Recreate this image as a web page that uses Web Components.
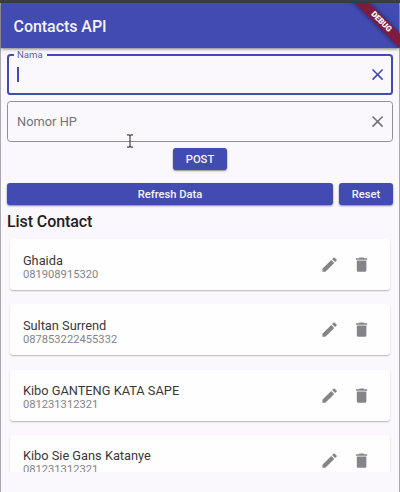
<!DOCTYPE html>
<html lang="id"><head><meta charset="utf-8"><title>Contacts API</title>
<style>
html,body{margin:0;height:100%;overflow:hidden}
body{font-family:Roboto,"Liberation Sans",sans-serif;background:#faf8fc;color:#38383c}
</style></head><body>
<contacts-app></contacts-app>
<script>
const define=(name,html)=>customElements.define(name,class extends HTMLElement{
  constructor(){
    super();
    const t=document.createElement('template');
    t.innerHTML=html;
    this.attachShadow({mode:'open'}).append(t.content.cloneNode(true));
    const icon=this.getAttribute('name');
    if(name==='md-icon')this.shadowRoot.querySelector('path').setAttribute('d',{
      close:'M19 6.41 17.59 5 12 10.59 6.41 5 5 6.41 10.59 12 5 17.59 6.41 19 12 13.41 17.59 19 19 17.59 13.41 12z',
      edit:'M3 17.25V21h3.75L17.81 9.94l-3.75-3.75L3 17.25zM20.71 7.04a1 1 0 0 0 0-1.41l-2.34-2.34a1 1 0 0 0-1.41 0l-1.83 1.83 3.75 3.75 1.83-1.83z',
      trash:'M6 19c0 1.1.9 2 2 2h8c1.1 0 2-.9 2-2V7H6v12zM19 4h-3.5l-1-1h-5l-1 1H5v2h14V4z'
    }[icon]);
  }
});
define('md-icon',`<style>:host{display:block;width:19.2px;height:19.2px;flex:none}svg{display:block;width:100%;height:100%;fill:currentColor}</style><svg viewBox="0 0 24 24"><path/></svg>`);
define('app-bar',`<style>
:host{display:flex;align-items:center;height:45px;padding:2px 0 0 12.5px;box-sizing:border-box;background:#424bb1;color:#f3f3ff;font-size:16px;font-weight:500;letter-spacing:-.05px;box-shadow:0 1px 3px #0008;position:relative;flex:none;z-index:1}
.clip{position:absolute;right:-1px;top:0;width:60px;height:45px;overflow:hidden}
.ribbon{position:absolute;width:90px;height:10px;left:-4.5px;top:14px;transform:rotate(45deg);background:#7e1b3f;box-shadow:0 0 5px #0008;color:#fff;text-align:center;font-size:8px;line-height:10px;font-weight:900;letter-spacing:-.1px}
</style><slot></slot><div class="clip"><div class="ribbon">DEBUG</div></div>`);
define('text-field',`<style>
:host{display:flex;align-items:center;justify-content:space-between;height:41px;box-sizing:border-box;border:1px solid #919095;border-radius:3.5px;padding:0 5px 0 9px;font-size:12.8px;color:#737277;position:relative;letter-spacing:.03px}
:host([focused]){color:#424bb1;border:2px solid #424bb1;padding:0 4px 0 8px}
.label{position:absolute;left:5px;top:-7px;padding:0 4px 0 3px;background:#faf8fc;font-size:9.6px;line-height:12px;letter-spacing:0;color:#5960b5}
.caret{display:block;width:1.5px;height:15px;background:#424bb1}
:host(:not([focused])) :is(.label,.caret){display:none}
</style><span class="label"><slot name="label"></slot></span><span class="caret"></span><slot></slot><md-icon name="close"></md-icon>`);
define('raised-button',`<style>
:host{display:flex;align-items:center;justify-content:center;height:22px;background:#424bb1;color:#f5f5ff;border-radius:3px;font-size:11.2px;font-weight:500;letter-spacing:0;box-shadow:0 1px 2px #0007}
</style><slot></slot>`);
define('contact-card',`<style>
:host{display:flex;align-items:center;height:51.2px;margin-bottom:14.1px;box-sizing:border-box;padding:4px 19px 0 12.9px;background:#fffeff;border-radius:3px;box-shadow:0 1px 1.5px #0004;flex:none}
.text{flex:1}.name{font-size:12.8px;line-height:15px;letter-spacing:0}
.phone{font-size:11.2px;line-height:13px;color:#858489}
.icons{display:flex;gap:12.8px;color:#858489;margin-top:-4px}
</style><div class="text"><div class="name"><slot></slot></div><div class="phone"><slot name="phone"></slot></div></div><div class="icons"><md-icon name="edit"></md-icon><md-icon name="trash"></md-icon></div>`);
define('contacts-app',`<style>
:host{display:flex;flex-direction:column;height:492px;box-sizing:border-box;border:solid #aaa8b0;border-width:0 1px;background:#faf8fc}
.system{height:3px;background:#3b3e4d;margin:0 -1px;flex:none}
.page{padding:6px 6px 0;display:flex;flex-direction:column}
.field2{margin-top:6px}.post{width:54px;align-self:center;margin-top:6px}
.actions{display:grid;grid-template-columns:1fr 54px;gap:6px;margin-top:13px}
h1{font-size:16px;line-height:20px;font-weight:500;margin:7px 0 0;color:#202024;letter-spacing:-.08px}
.list{height:238px;margin:2px -1px 0;padding:5px 4px 0;box-sizing:border-box;overflow:hidden;display:flex;flex-direction:column}
.mouse{position:absolute;left:126px;top:134px;width:8px;height:14px}
</style>
<div class="system"></div><app-bar>Contacts API</app-bar>
<div class="page">
<text-field focused><span slot="label">Nama</span></text-field>
<text-field class="field2">Nomor HP</text-field>
<raised-button class="post">POST</raised-button>
<div class="actions"><raised-button>Refresh Data</raised-button><raised-button>Reset</raised-button></div>
<h1>List Contact</h1>
<div class="list">
<contact-card>Ghaida<span slot="phone">081908915320</span></contact-card>
<contact-card>Sultan Surrend<span slot="phone">087853222455332</span></contact-card>
<contact-card>Kibo GANTENG KATA SAPE<span slot="phone">081231312321</span></contact-card>
<contact-card>Kibo Sie Gans Katanye<span slot="phone">081231312321</span></contact-card>
</div></div>
<svg class="mouse" viewBox="0 0 8 14" fill="none" stroke="#45444a" stroke-width="1.2"><path d="M1 .8h2l1 1 1-1h2M4 1.5v11M1 13.2h2l1-1 1 1h2"/></svg>`);
</script></body></html>
